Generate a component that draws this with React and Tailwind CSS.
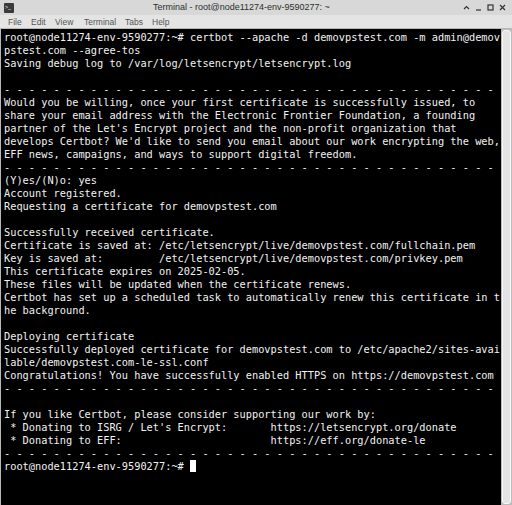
import React from "react";

const D = "- - - - - - - - - - - - - - - - - - - - - - - - - - - - - - - - - - - - - - - -";

const lines = [
  "root@node11274-env-9590277:~# certbot --apache -d demovpstest.com -m admin@demov",
  "pstest.com --agree-tos",
  "Saving debug log to /var/log/letsencrypt/letsencrypt.log",
  "",
  D,
  "Would you be willing, once your first certificate is successfully issued, to",
  "share your email address with the Electronic Frontier Foundation, a founding",
  "partner of the Let's Encrypt project and the non-profit organization that",
  "develops Certbot? We'd like to send you email about our work encrypting the web,",
  "EFF news, campaigns, and ways to support digital freedom.",
  D,
  "(Y)es/(N)o: yes",
  "Account registered.",
  "Requesting a certificate for demovpstest.com",
  "",
  "Successfully received certificate.",
  "Certificate is saved at: /etc/letsencrypt/live/demovpstest.com/fullchain.pem",
  "Key is saved at:         /etc/letsencrypt/live/demovpstest.com/privkey.pem",
  "This certificate expires on 2025-02-05.",
  "These files will be updated when the certificate renews.",
  "Certbot has set up a scheduled task to automatically renew this certificate in t",
  "he background.",
  "",
  "Deploying certificate",
  "Successfully deployed certificate for demovpstest.com to /etc/apache2/sites-avai",
  "lable/demovpstest.com-le-ssl.conf",
  "Congratulations! You have successfully enabled HTTPS on https://demovpstest.com",
  D,
  "",
  "If you like Certbot, please consider supporting our work by:",
  " * Donating to ISRG / Let's Encrypt:       https://letsencrypt.org/donate",
  " * Donating to EFF:                        https://eff.org/donate-le",
  D,
];

export default function App() {
  return (
    <div className="w-[512px] h-[505px] overflow-hidden flex flex-col bg-[#dcdcdc]" style={{ fontFamily: "'Liberation Sans', Arial, sans-serif" }}>
      {/* title bar */}
      <div className="h-[15px] flex items-center relative bg-[#d8d8d8] shrink-0">
        <div className="ml-[4px] w-[10px] h-[10px] bg-[#3a3a3a] rounded-[1px] flex items-start justify-start shrink-0">
          <span className="text-white text-[5px] leading-[6px] ml-[1px] mt-[1px]">&gt;_</span>
        </div>
        <div className="flex-1 text-[9px] text-[#2e2e2e] leading-none pl-[139px] whitespace-nowrap">
          Terminal - root@node11274-env-9590277: ~
        </div>
        <div className="flex items-center gap-[5px] mr-[6px] text-[#2e2e2e]">
          <svg width="7" height="7" viewBox="0 0 7 7"><path d="M1 5 L3.5 2.5 L6 5" stroke="#333" strokeWidth="1.2" fill="none" /></svg>
          <svg width="7" height="7" viewBox="0 0 7 7"><path d="M1 6 H6" stroke="#333" strokeWidth="1.2" /></svg>
          <svg width="7" height="7" viewBox="0 0 7 7"><rect x="1" y="1" width="5" height="5" stroke="#333" strokeWidth="1.2" fill="none" /></svg>
          <svg width="7" height="7" viewBox="0 0 7 7"><path d="M1 1 L6 6 M6 1 L1 6" stroke="#333" strokeWidth="1.2" /></svg>
        </div>
      </div>
      {/* menu bar */}
      <div className="h-[13px] flex items-center bg-[#e4e4e4] text-[8.5px] text-[#555] shrink-0 pl-[8px] leading-none pt-[1px]">
        <span className="w-[23px]">File</span>
        <span className="w-[24px]">Edit</span>
        <span className="w-[29px]">View</span>
        <span className="w-[41px]">Terminal</span>
        <span className="w-[27px]">Tabs</span>
        <span>Help</span>
      </div>
      {/* terminal */}
      <div className="flex-1 flex border-t border-l border-[#b8b8b8] bg-black min-h-0">
        <div className="flex-1 pl-[3px] pt-[1.5px] text-[#f2f2f2] text-[10.3px] leading-[13px] whitespace-pre overflow-hidden" style={{ fontFamily: "'DejaVu Sans Mono', monospace" }}>
          {lines.map((l, i) => (
            <div key={i} className="h-[13px]">{l}</div>
          ))}
          <div className="h-[13px] flex items-center">
            <span>root@node11274-env-9590277:~# </span>
            <span className="inline-block w-[6px] h-[12px] bg-white"></span>
          </div>
        </div>
        <div className="w-[11px] bg-[#bcbcbc] flex shrink-0 p-[1px]">
          <div className="flex-1 bg-[#e4e4e4] border border-[#f8f8f8] rounded-[3px]"></div>
        </div>
      </div>
    </div>
  );
}
